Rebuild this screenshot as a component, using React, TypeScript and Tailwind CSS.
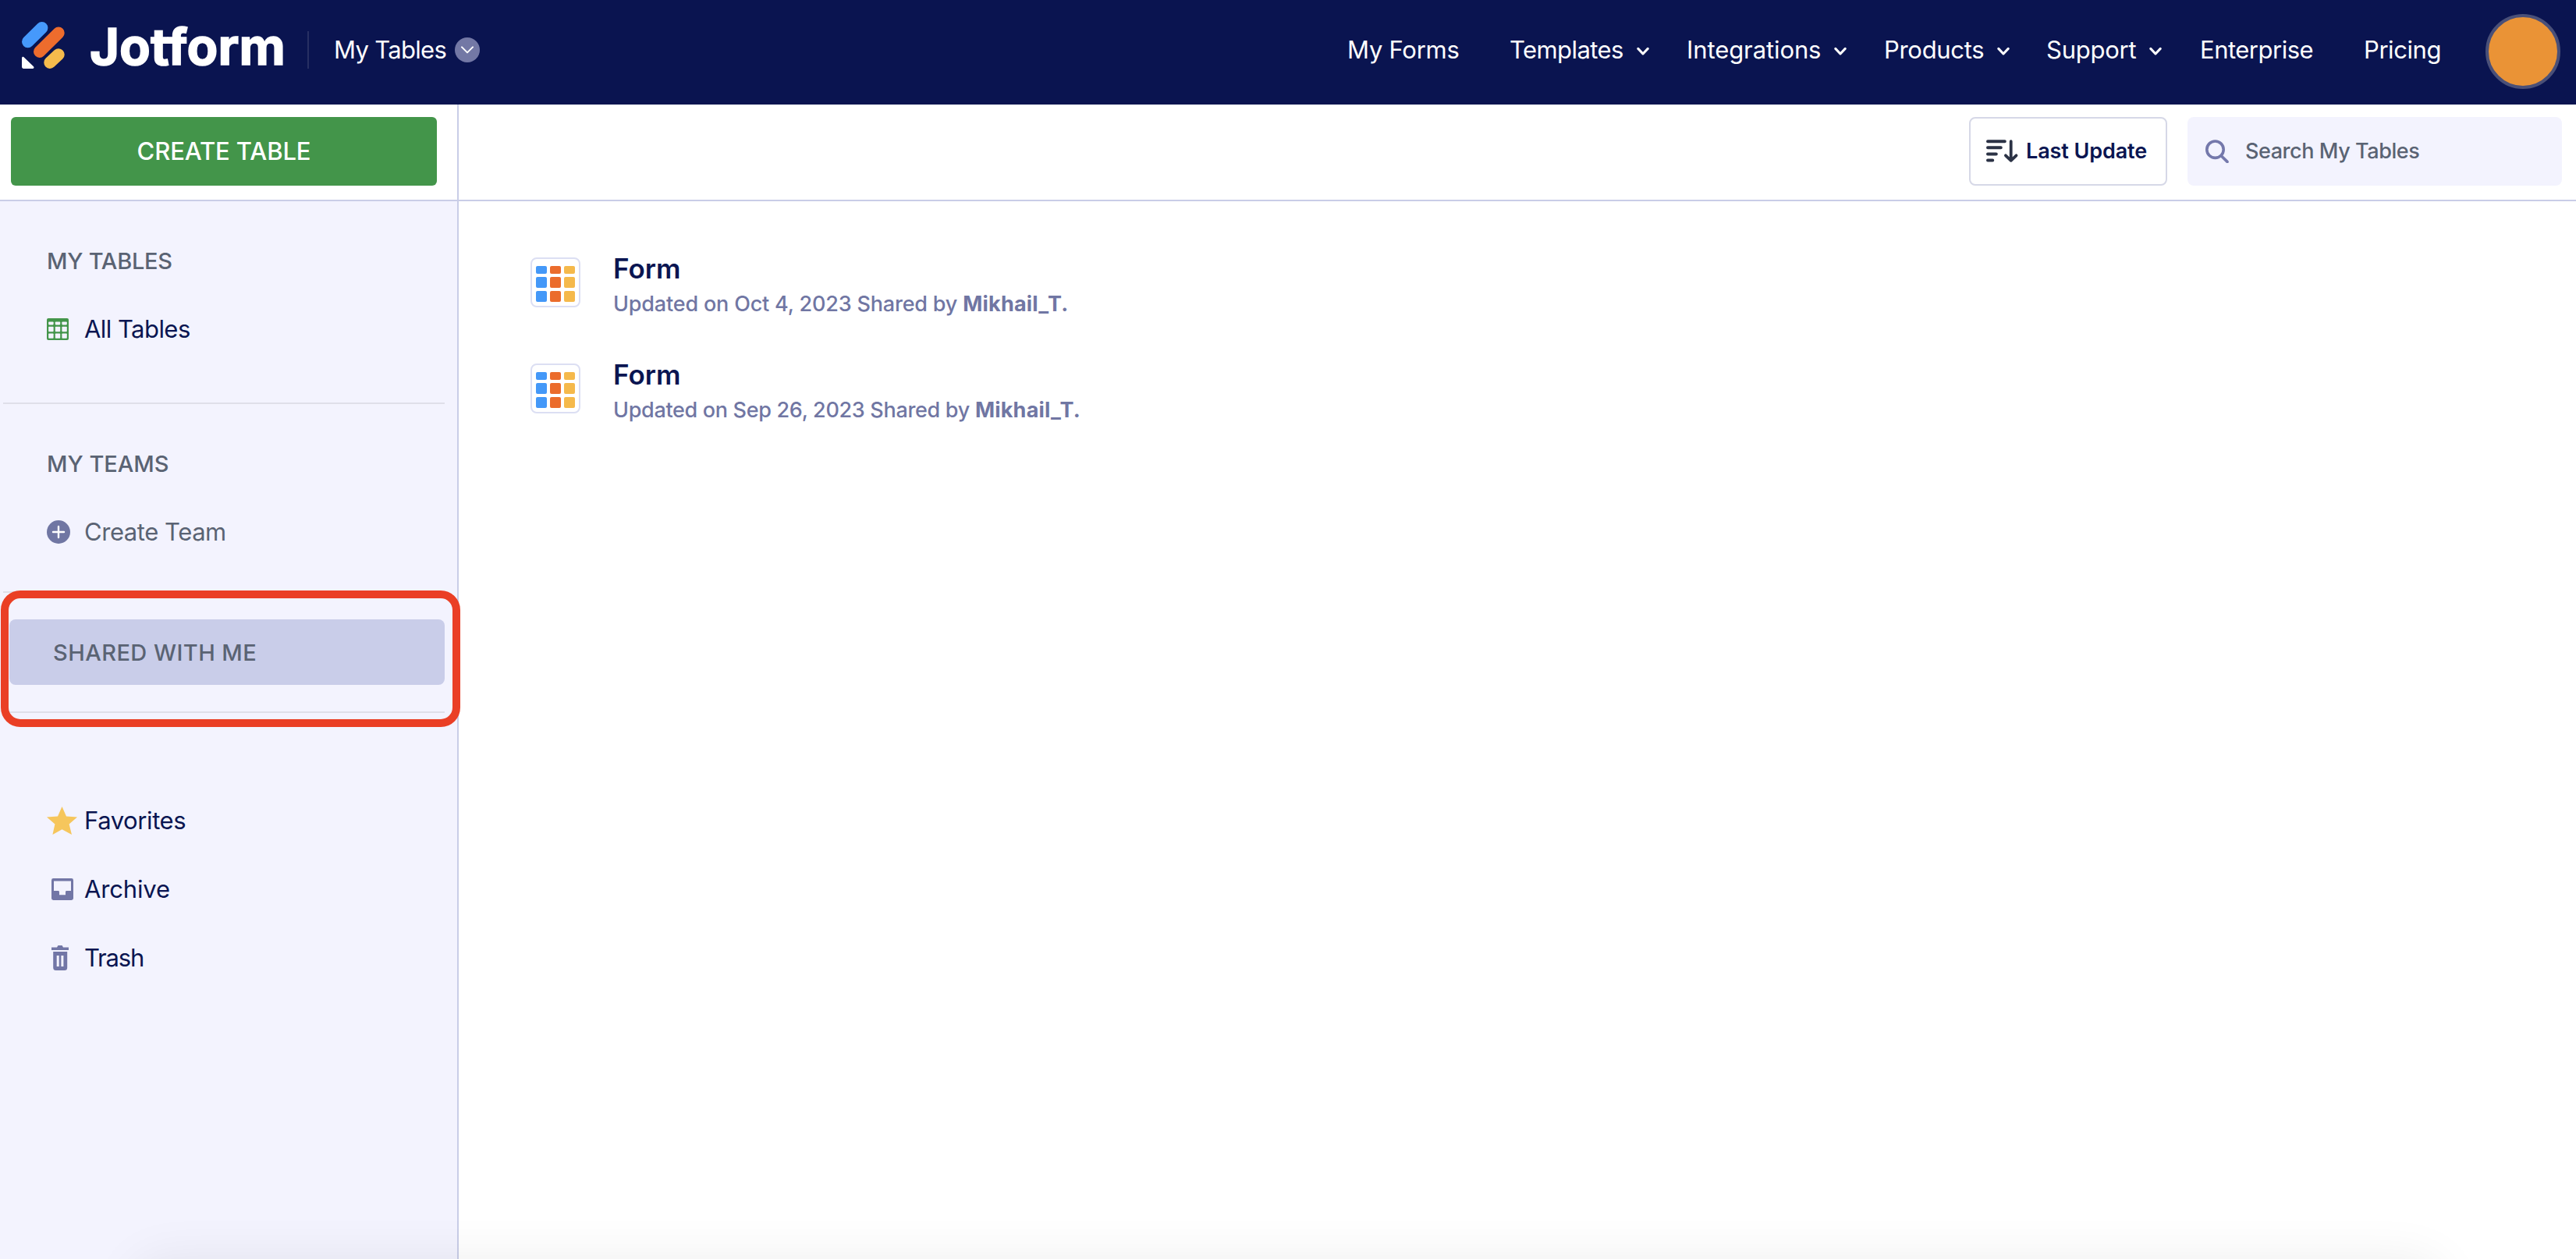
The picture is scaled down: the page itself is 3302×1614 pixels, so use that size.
import type { ReactNode } from "react";

function Logo() {
  return (
    <svg className="h-[60px] w-[56px] shrink-0" viewBox="0 0 56 60" fill="none" strokeLinecap="round" strokeWidth="15.4">
      <path d="M25.7 7.7 7.7 25.5" stroke="#4699fb" />
      <path d="M47 14.2 22.7 38.2" stroke="#ed6c2d" />
      <path d="M47 41.9 36 52.2" stroke="#f5bb4c" />
      <path d="M0 46.6c0-1.6 1.7-2.3 2.8-1.2l12.2 11.9c1.1 1.1.4 2.7-1.2 2.7H2.2C1 60 0 59 0 57.8z" fill="#fff" stroke="none" />
    </svg>
  );
}

function Chevron() {
  return (
    <svg className="mt-1 h-3 w-4 shrink-0" viewBox="0 0 16 12" fill="none" stroke="#fff" strokeWidth="3" strokeLinecap="round" strokeLinejoin="round">
      <path d="M1.8 2.4 8 9l6.2-6.6" />
    </svg>
  );
}

function TableIcon() {
  return (
    <svg className="h-7 w-7" viewBox="0 0 28 28">
      <rect width="28" height="28" rx="2" fill="#43954a" />
      <g fill="#f3f3fe">
        <rect x="2.2" y="4.4" width="6.4" height="4" rx=".8" />
        <rect x="10.8" y="4.4" width="6.4" height="4" rx=".8" />
        <rect x="19.4" y="4.4" width="6.4" height="4" rx=".8" />
        <rect x="2.2" y="10.8" width="6.4" height="6.4" rx=".8" />
        <rect x="10.8" y="10.8" width="6.4" height="6.4" rx=".8" />
        <rect x="19.4" y="10.8" width="6.4" height="6.4" rx=".8" />
        <rect x="2.2" y="19.4" width="6.4" height="6.4" rx=".8" />
        <rect x="10.8" y="19.4" width="6.4" height="6.4" rx=".8" />
        <rect x="19.4" y="19.4" width="6.4" height="6.4" rx=".8" />
      </g>
    </svg>
  );
}

function PlusIcon() {
  return (
    <svg className="h-[30px] w-[30px]" viewBox="0 0 30 30">
      <circle cx="15" cy="15" r="15" fill="#7076a3" />
      <path d="M15 8v14M8 15h14" stroke="#fff" strokeWidth="2.4" strokeLinecap="round" />
    </svg>
  );
}

function StarIcon() {
  return (
    <svg className="h-9 w-[39px]" viewBox="0 0 39 36" fill="#f6c65c">
      <path d="M19.5 0 25 12.4l14 1.2-10.4 9L32 36l-12.5-6.8L7.4 36l3-13.4L0 13.6l14-1.2z" />
    </svg>
  );
}

function ArchiveIcon() {
  return (
    <svg className="ml-1.5 h-7 w-7" viewBox="0 0 28 28">
      <rect width="28" height="28" rx="2.4" fill="#7276a6" />
      <path d="M3 3.4h22V16h-5.6q-1.4 0-1.4 1.4v3.9h-8v-3.9Q10 16 8.600 16H3z" fill="#f3f3fe" />
    </svg>
  );
}

function TrashIcon() {
  return (
    <svg className="ml-1.5 h-8 w-[22px]" viewBox="0 0 22 32" fill="#7276a6">
      <path d="M0 2.400h7L8.400 0h5.200L15 2.400h7V6H0z" />
      <path fillRule="evenodd" d="M2.200 8h18v20.500q0 3.500-3.500 3.500h-11q-3.500 0-3.500-3.500zM6.700 13v14h3V13zM12.400 13v14h3V13z" />
    </svg>
  );
}

function SortIcon() {
  return (
    <svg className="h-[30px] w-[42px] shrink-0" viewBox="0 0 42 30" fill="none" stroke="#2b3245" strokeWidth="4" strokeLinecap="round" strokeLinejoin="round">
      <path d="M2 2.200h21.800M2 10.300h16.800M2 18.400h10.800M2 26.500h6.200" />
      <path d="M31.700 2.200v24.600M24.900 20.300l6.800 6.500 6.800-6.500" strokeWidth="3.800" />
    </svg>
  );
}

function SearchIcon() {
  return (
    <svg className="h-[30px] w-[30px] shrink-0" viewBox="0 0 30 30" fill="none" stroke="#7478ab" strokeWidth="3.600" strokeLinecap="round">
      <circle cx="12.500" cy="12.700" r="10.700" />
      <path d="m20.500 21 7.500 7.400" />
    </svg>
  );
}

type NavEntry = { label: string; box: string; menu?: boolean };

const nav: NavEntry[] = [
  { label: "My Forms", box: "w-[208px] tracking-[-0.26px]" },
  { label: "Templates", box: "w-[227px] tracking-[-0.57px]", menu: true },
  { label: "Integrations", box: "w-[253px] tracking-[-0.1px]", menu: true },
  { label: "Products", box: "w-[208px] tracking-[-0.3px]", menu: true },
  { label: "Support", box: "w-[197px] tracking-[-0.25px]", menu: true },
  { label: "Enterprise", box: "w-[210px] tracking-[-0.5px]" },
  { label: "Pricing", box: "w-[156px] tracking-[-0.42px]" },
];

function Header() {
  return (
    <header className="flex h-[134px] shrink-0 items-center bg-[#0a1450] pr-5 pl-7 text-[31px] font-[430] text-white">
      <div className="-mt-[18px] flex items-center">
        <Logo />
        <span className="mt-[3px] ml-[31px] w-[279px] text-[65px] leading-[60px] font-bold tracking-[0.1px] [-webkit-text-stroke:1.5px_white]">Jotform</span>
      </div>
      <div className="-mt-1.5 h-12 w-0.5 bg-[#272f63]" />
      <div className="-mt-1.5 ml-8 flex items-center">
        <span className="w-[155px] tracking-[-0.69px]">My Tables</span>
        <span className="flex h-8 w-8 items-center justify-center rounded-full bg-[#7378a5]">
          <svg className="h-3 w-4" viewBox="0 0 16 12" fill="none" stroke="#fff" strokeWidth="2" strokeLinecap="round" strokeLinejoin="round">
            <path d="m1 2.400 7 7 7-7" />
          </svg>
        </span>
      </div>
      <nav className="-mt-1.5 ml-auto flex">
        {nav.map((n) => (
          <a key={n.label} className={`flex items-center gap-[17px] ${n.box}`}>
            {n.label}
            {n.menu && <Chevron />}
          </a>
        ))}
      </nav>
      <div className="-mt-0.5 h-24 w-24 rounded-full border-4 border-[#4a5078] bg-[#ea9336]" />
    </header>
  );
}

function Heading({ children, className }: { children: ReactNode; className: string }) {
  return <h2 className={`flex h-[88px] items-center pt-px pl-[60px] text-[29px] font-[550] text-[#5a6373] ${className}`}>{children}</h2>;
}

function Item({ icon, children, className }: { icon: ReactNode; children: ReactNode; className: string }) {
  return (
    <a className={`flex h-[88px] items-center pl-[60px] text-[31px] font-[430] ${className}`}>
      <span className="flex w-12 shrink-0 items-center">{icon}</span>
      {children}
    </a>
  );
}

function Rule() {
  return <div className="mr-4 ml-1 h-0.5 shrink-0 bg-[#dfdfe9]" />;
}

function Sidebar() {
  return (
    <aside className="relative flex w-[588px] shrink-0 flex-col border-r-2 border-[#c9cde7] bg-[#f3f3fe] pt-8">
      <Heading className="tracking-[-0.25px]">MY TABLES</Heading>
      <Item icon={<TableIcon />} className="mb-[50px] tracking-[-0.55px] text-[#0a1551]">All Tables</Item>
      <Rule />
      <Heading className="mt-8 tracking-[0px]">MY TEAMS</Heading>
      <Item icon={<PlusIcon />} className="mb-8 tracking-[-0.45px] text-[#5a6373]">Create Team</Item>
      <Rule />
      <div className="mt-[34px] mr-4 mb-[34px] ml-3 flex h-[84px] items-center rounded-lg bg-[#c9cde9] pt-px pl-14 text-[29px] font-[550] tracking-[0.44px] text-[#5a6373]">
        SHARED WITH ME
      </div>
      <Rule />
      <Item icon={<StarIcon />} className="mt-[94px] tracking-[-0.4px] text-[#0a1551]">Favorites</Item>
      <Item icon={<ArchiveIcon />} className="tracking-[-0.15px] text-[#0a1551]">Archive</Item>
      <Item icon={<TrashIcon />} className="tracking-[-1.2px] text-[#0a1551]">Trash</Item>
      <div className="absolute top-[499px] left-px h-[175px] w-[589px] rounded-[25px] border-10 border-[#ea3f25]" />
    </aside>
  );
}

function Thumb() {
  return (
    <div className="grid h-16 w-16 shrink-0 grid-cols-[14px_14px_14px] grid-rows-[10px_14px_14px] content-start justify-center gap-1 rounded-lg border-2 border-[#dcdff3] bg-white pt-[9px]">
      {[0, 1, 2].map((r) => (
        <div key={r} className="contents">
          <i className="rounded-xs bg-[#4498f8]" />
          <i className="rounded-xs bg-[#eb6c2c]" />
          <i className="rounded-xs bg-[#f5b94b]" />
        </div>
      ))}
    </div>
  );
}

function Row({ date, className }: { date: string; className: string }) {
  return (
    <li className="flex h-[136px] items-start">
      <div className="pt-9">
        <Thumb />
      </div>
      <div className="ml-[42px] pt-[26px]">
        <div className="text-[35px] leading-[48px] font-[570] text-[#0a1551]">Form</div>
        <div className="flex gap-[7px] text-[27px] leading-[44px] font-[540] text-[#7076a3]">
          <span className={className}>Updated on {date} Shared by</span>
          <b className="font-bold tracking-[0.2px]">Mikhail_T.</b>
        </div>
      </div>
    </li>
  );
}

export default function App() {
  return (
    <div className="relative flex h-[1614px] w-[3302px] flex-col overflow-hidden bg-white font-['Inter',sans-serif]">
      <Header />
      <div className="flex h-[124px] shrink-0 border-b-2 border-[#c9cde7]">
        <div className="w-[588px] border-r-2 border-[#c9cde7] pt-4 pl-3.5">
          <button className="h-[88px] w-[546px] rounded-md bg-[#43954a] text-[31px] font-[550] tracking-[-0.1px] text-white">CREATE TABLE</button>
        </div>
        <div className="flex flex-1 items-start justify-end gap-[26px] pt-4 pr-[18px]">
          <button className="flex h-[88px] w-[254px] items-center gap-[9px] rounded-lg border-2 border-[#d6d8e7] pl-5 text-[27px] font-semibold tracking-[-0.1px] whitespace-nowrap text-[#0a1551]">
            <SortIcon />
            <span className="pt-px">Last Update</span>
          </button>
          <div className="flex h-[88px] w-[480px] items-center gap-[21px] rounded-lg bg-[#f3f3fe] pl-[23px] text-[27px] font-[540] tracking-[-0.43px] text-[#5a6373]">
            <SearchIcon />
            <span className="pt-px">Search My Tables</span>
          </div>
        </div>
      </div>
      <div className="flex min-h-0 flex-1">
        <Sidebar />
        <ul className="flex-1 pt-9 pl-[92px]">
          <Row date="Oct 4, 2023" className="tracking-[-0.18px]" />
          <Row date="Sep 26, 2023" className="tracking-[-0.32px]" />
        </ul>
      </div>
      <div className="pointer-events-none absolute top-full right-[170px] left-[170px] h-24 rounded-[40px] shadow-[0_0_64px_rgba(0,0,0,0.07)]" />
    </div>
  );
}
